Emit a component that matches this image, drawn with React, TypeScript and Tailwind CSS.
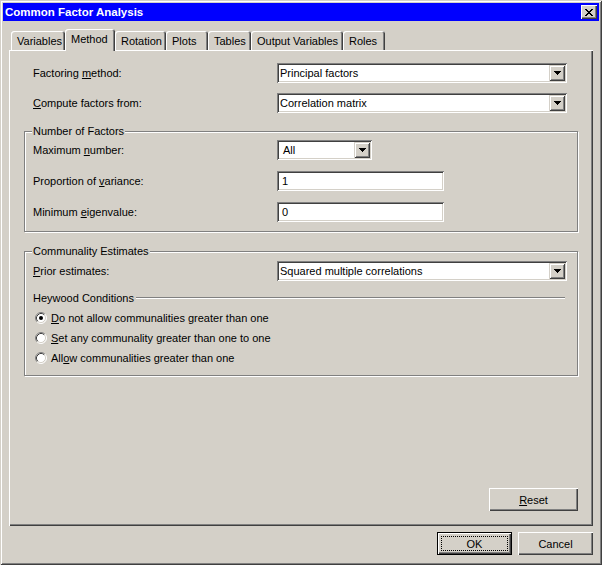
import React from "react";

const SUNKEN =
  "shadow-[inset_1px_1px_0_#808080,inset_-1px_-1px_0_#ffffff,inset_2px_2px_0_#404040,inset_-2px_-2px_0_#d4d0c8]";
const RAISED =
  "shadow-[inset_1px_1px_0_#ffffff,inset_-1px_-1px_0_#404040,inset_-2px_-2px_0_#808080]";
const RAISED_SMALL =
  "shadow-[inset_1px_1px_0_#d4d0c8,inset_-1px_-1px_0_#404040,inset_2px_2px_0_#ffffff,inset_-2px_-2px_0_#808080]";

function Arrow() {
  return (
    <svg width="7" height="4" viewBox="0 0 7 4" shapeRendering="crispEdges">
      <path d="M0 0h7v1H0z M1 1h5v1H1z M2 2h3v1H2z M3 3h1v1H3z" fill="#000" />
    </svg>
  );
}

function Combo({ value, width, pad }: { value: string; width: string; pad: string }) {
  return (
    <div className={`h-[20px] ${width} bg-white flex items-stretch p-[2px] ${SUNKEN}`}>
      <div className={`flex-1 flex items-center ${pad} leading-[14px] whitespace-nowrap`}>{value}</div>
      <div className={`w-[16px] bg-[#d4d0c8] flex items-center justify-center ${RAISED_SMALL}`}>
        <Arrow />
      </div>
    </div>
  );
}

function Edit({ value }: { value: string }) {
  return (
    <div className={`h-[20px] w-[167px] bg-white flex items-center pl-[5px] ${SUNKEN}`}>{value}</div>
  );
}

function Row({ label, children }: { label: React.ReactNode; children: React.ReactNode }) {
  return (
    <div className="flex items-center">
      <div className="w-[244px] whitespace-nowrap">{label}</div>
      {children}
    </div>
  );
}

function Radio({ checked }: { checked?: boolean }) {
  return (
    <svg width="12" height="12" viewBox="0 0 12 12">
      <circle cx="6" cy="6" r="5" fill="#fff" />
      <path d="M2.11 9.89 A5.5 5.5 0 0 1 9.89 2.11" stroke="#808080" fill="none" />
      <path d="M9.89 2.11 A5.5 5.5 0 0 1 2.11 9.89" stroke="#ffffff" fill="none" />
      <path d="M2.82 9.18 A4.5 4.5 0 0 1 9.18 2.82" stroke="#404040" fill="none" />
      <path d="M9.18 2.82 A4.5 4.5 0 0 1 2.82 9.18" stroke="#d4d0c8" fill="none" />
      {checked && <circle cx="6" cy="6" r="2" fill="#000" />}
    </svg>
  );
}

function RadioRow({ checked, children }: { checked?: boolean; children: React.ReactNode }) {
  return (
    <div className="h-[20px] flex items-center pl-[2px] gap-[4px]">
      <Radio checked={checked} />
      <span className="whitespace-nowrap">{children}</span>
    </div>
  );
}

function Group({
  title,
  className,
  children,
}: {
  title: string;
  className?: string;
  children: React.ReactNode;
}) {
  return (
    <div
      className={`relative border border-[#808080] shadow-[inset_1px_1px_0_#ffffff,1px_1px_0_#ffffff] pl-[8px] pr-[10px] ${className ?? ""}`}
    >
      <span className="absolute -top-[8px] left-[7px] px-[1px] bg-[#d4d0c8] leading-[14px] whitespace-nowrap">
        {title}
      </span>
      {children}
    </div>
  );
}

const TABS: { name: string; w: string }[] = [
  { name: "Variables", w: "w-[54px]" },
  { name: "Method", w: "w-[50px]" },
  { name: "Rotation", w: "w-[51px]" },
  { name: "Plots", w: "w-[42px]" },
  { name: "Tables", w: "w-[43px]" },
  { name: "Output Variables", w: "w-[92px]" },
  { name: "Roles", w: "w-[42px]" },
];

export default function App() {
  return (
    <div className="w-[602px] h-[565px] bg-[#d4d0c8] p-[3px] flex flex-col shadow-[inset_1px_1px_0_#d4d0c8,inset_-1px_-1px_0_#404040,inset_2px_2px_0_#ffffff,inset_-2px_-2px_0_#808080] font-['Liberation_Sans',Arial,sans-serif] text-[11px] leading-[14px] text-black select-none">
      {/* Title bar */}
      <div className="h-[18px] bg-[#0000ff] flex items-center justify-between pl-[2px] pr-[2px]">
        <span className="text-white font-bold text-[11.5px] leading-[14px]">Common Factor Analysis</span>
        <div className={`w-[16px] h-[14px] bg-[#d4d0c8] flex items-center justify-center ${RAISED}`}>
          <svg width="8" height="7" viewBox="0 0 8 7" shapeRendering="crispEdges">
            <path
              d="M0 0h2v1H0z M6 0h2v1H6z M1 1h2v1H1z M5 1h2v1H5z M2 2h4v1H2z M3 3h2v1H3z M2 4h4v1H2z M1 5h2v1H1z M5 5h2v1H5z M0 6h2v1H0z M6 6h2v1H6z"
              fill="#000"
            />
          </svg>
        </div>
      </div>

      <div className="flex-1 flex flex-col px-[6px]">
        {/* Tabs */}
        <div className="mt-[8px] h-[21px] flex items-end pl-[2px]">
          {TABS.map((t) =>
            t.name === "Method" ? (
              <div
                key={t.name}
                className={`${t.w} h-[22px] -mb-[1px] relative z-10 bg-[#d4d0c8] rounded-t-[3px] pl-[6px] pt-[3px] shadow-[inset_1px_1px_0_#ffffff,inset_-1px_0_0_#404040,inset_-2px_0_0_#808080]`}
              >
                {t.name}
              </div>
            ) : (
              <div
                key={t.name}
                className={`${t.w} h-[19px] bg-[#d4d0c8] rounded-t-[3px] pl-[6px] pt-[3px] whitespace-nowrap shadow-[inset_1px_1px_0_#ffffff,inset_-1px_0_0_#404040,inset_-2px_0_0_#808080]`}
              >
                {t.name}
              </div>
            )
          )}
        </div>

        {/* Panel */}
        <div className="h-[476px] flex flex-col px-[15px] pt-[13px] pb-[15px] shadow-[inset_1px_1px_0_#ffffff,inset_-1px_-1px_0_#404040,inset_-2px_-2px_0_#808080]">
          <div className="pl-[9px]">
            <Row
              label={
                <>
                  Factoring <u>m</u>ethod:
                </>
              }
            >
              <Combo value="Principal factors" width="w-[290px]" pad="pl-[1px]" />
            </Row>
          </div>
          <div className="pl-[9px] mt-[10px]">
            <Row
              label={
                <>
                  <u>C</u>ompute factors from:
                </>
              }
            >
              <Combo value="Correlation matrix" width="w-[290px]" pad="pl-[1px]" />
            </Row>
          </div>

          <Group title="Number of Factors" className="mt-[18px] pt-[8px] pb-[9px]">
            <Row
              label={
                <>
                  Maximum <u>n</u>umber:
                </>
              }
            >
              <Combo value="All" width="w-[95px]" pad="pl-[4px]" />
            </Row>
            <div className="mt-[11px]">
              <Row
                label={
                  <>
                    Proportion of <u>v</u>ariance:
                  </>
                }
              >
                <Edit value="1" />
              </Row>
            </div>
            <div className="mt-[11px]">
              <Row
                label={
                  <>
                    Minimum <u>e</u>igenvalue:
                  </>
                }
              >
                <Edit value="0" />
              </Row>
            </div>
          </Group>

          <Group title="Communality Estimates" className="mt-[19px] pt-[9px] pb-[7px]">
            <Row
              label={
                <>
                  <u>P</u>rior estimates:
                </>
              }
            >
              <Combo value="Squared multiple correlations" width="w-[290px]" pad="pl-[1px]" />
            </Row>
            <div className="mt-[10px] h-[14px] flex items-center">
              <span className="whitespace-nowrap">Heywood Conditions</span>
              <div className="flex-1 ml-[2px] mr-[2px] border-t border-t-[#808080] border-b border-b-white" />
            </div>
            <div className="mt-[3px] flex flex-col">
              <RadioRow checked>
                <u>D</u>o not allow communalities greater than one
              </RadioRow>
              <RadioRow>
                <u>S</u>et any communality greater than one to one
              </RadioRow>
              <RadioRow>
                All<u>o</u>w communalities greater than one
              </RadioRow>
            </div>
          </Group>

          <div className="mt-auto flex justify-end">
            <button
              className={`w-[89px] h-[23px] bg-[#d4d0c8] flex items-center justify-center ${RAISED}`}
            >
              <span>
                <u>R</u>eset
              </span>
            </button>
          </div>
        </div>

        {/* Bottom buttons */}
        <div className="mt-[6px] flex justify-end gap-[6px]">
          <button
            className={`relative w-[75px] h-[23px] bg-[#d4d0c8] border border-black flex items-center justify-center ${RAISED}`}
          >
            <span className="absolute inset-[3px] border border-dotted border-black" />
            <span>OK</span>
          </button>
          <button
            className={`w-[75px] h-[23px] bg-[#d4d0c8] flex items-center justify-center ${RAISED}`}
          >
            Cancel
          </button>
        </div>
      </div>
    </div>
  );
}
